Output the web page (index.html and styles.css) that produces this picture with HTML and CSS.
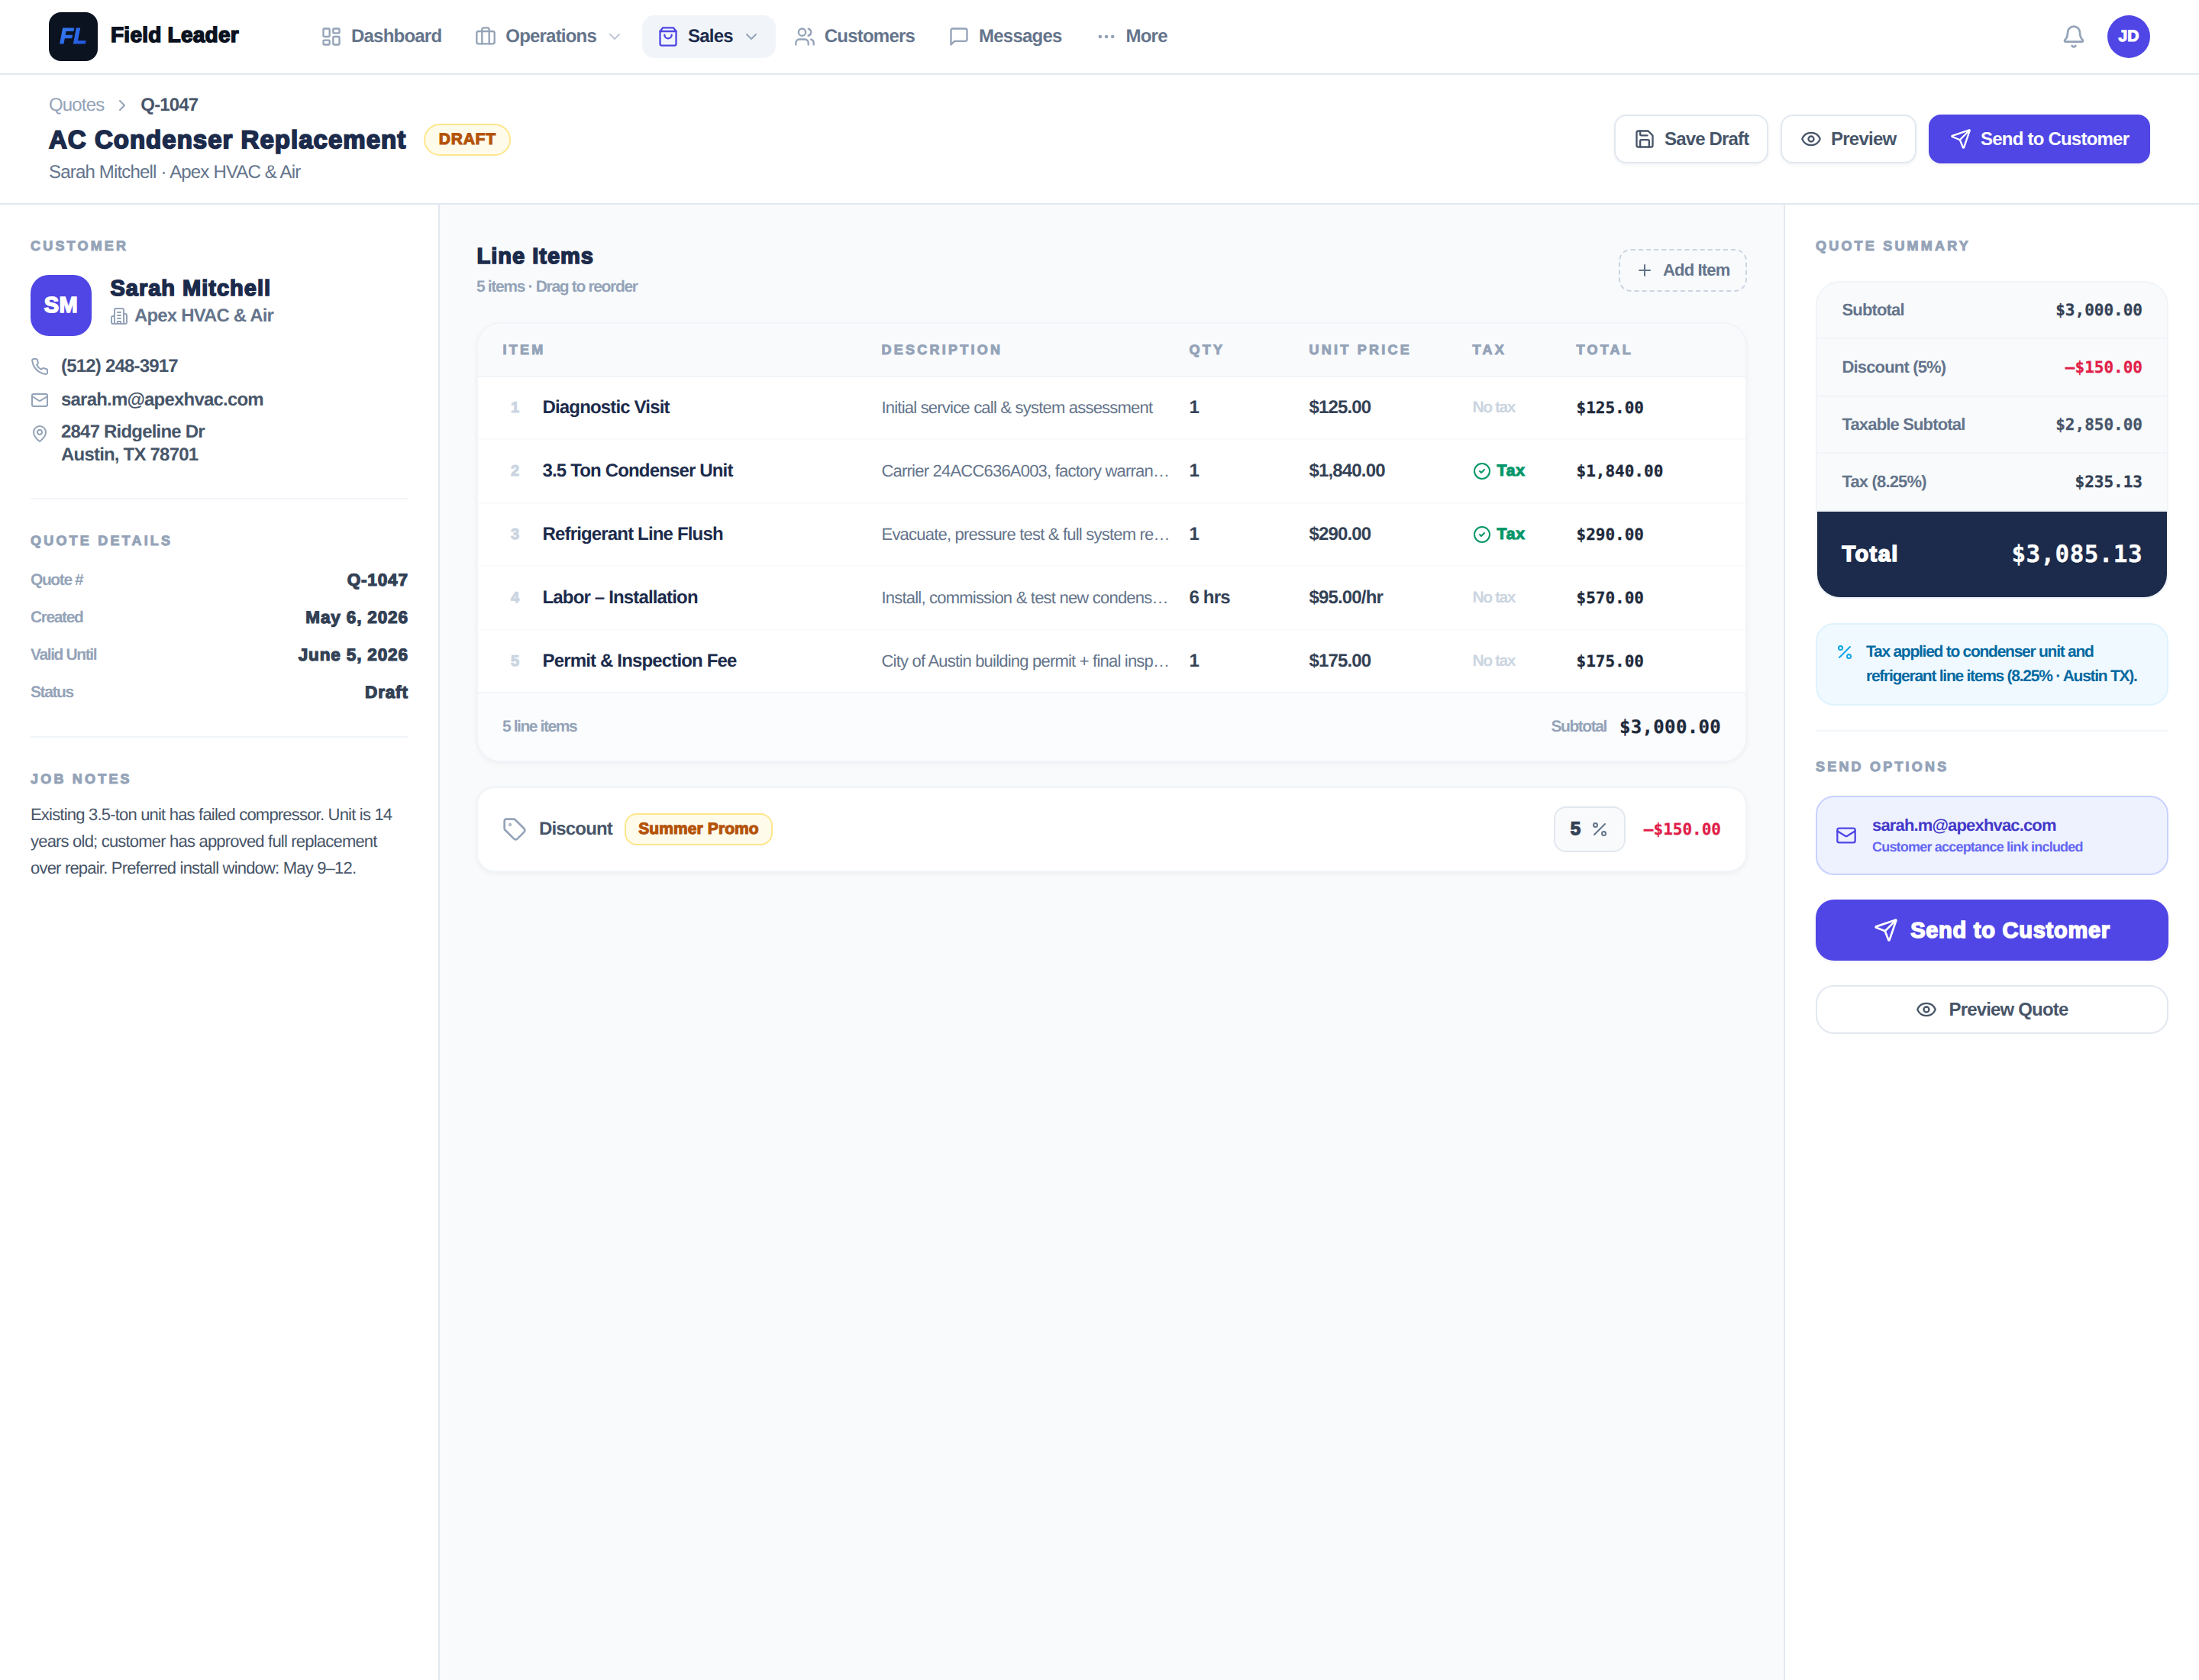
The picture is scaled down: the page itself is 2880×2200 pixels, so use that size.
FILE: index.html
```html
<!DOCTYPE html>
<html lang="en">
<head>
<meta charset="utf-8">
<title>Field Leader – Quote Q-1047</title>
<link rel="stylesheet" href="styles.css">
</head>
<body>
<svg class="sprite" aria-hidden="true">
  <symbol id="dashboard" viewBox="0 0 24 24"><rect x="3" y="3" width="7" height="9" rx="1"/><rect x="14" y="3" width="7" height="5" rx="1"/><rect x="14" y="12" width="7" height="9" rx="1"/><rect x="3" y="16" width="7" height="5" rx="1"/></symbol>
  <symbol id="luggage" viewBox="0 0 24 24"><path d="M16 20V4a2 2 0 0 0-2-2h-4a2 2 0 0 0-2 2v16"/><rect x="2" y="6" width="20" height="14" rx="2"/></symbol>
  <symbol id="bag" viewBox="0 0 24 24"><path d="M6 2 3 6v14a2 2 0 0 0 2 2h14a2 2 0 0 0 2-2V6l-3-4Z"/><path d="M3 6h18"/><path d="M16 10a4 4 0 0 1-8 0"/></symbol>
  <symbol id="users" viewBox="0 0 24 24"><path d="M16 21v-2a4 4 0 0 0-4-4H6a4 4 0 0 0-4 4v2"/><circle cx="9" cy="7" r="4"/><path d="M22 21v-2a4 4 0 0 0-3-3.87"/><path d="M16 3.13a4 4 0 0 1 0 7.75"/></symbol>
  <symbol id="message" viewBox="0 0 24 24"><path d="M21 15a2 2 0 0 1-2 2H7l-4 4V5a2 2 0 0 1 2-2h14a2 2 0 0 1 2 2z"/></symbol>
  <symbol id="dots" viewBox="0 0 24 24"><circle cx="12" cy="12" r="1"/><circle cx="19" cy="12" r="1"/><circle cx="5" cy="12" r="1"/></symbol>
  <symbol id="down" viewBox="0 0 24 24"><path d="m6 9 6 6 6-6"/></symbol>
  <symbol id="right" viewBox="0 0 24 24"><path d="m9 18 6-6-6-6"/></symbol>
  <symbol id="bell" viewBox="0 0 24 24"><path d="M10.268 21a2 2 0 0 0 3.464 0"/><path d="M3.262 15.326A1 1 0 0 0 4 17h16a1 1 0 0 0 .74-1.673C19.41 13.956 18 12.499 18 8A6 6 0 0 0 6 8c0 4.499-1.411 5.956-2.738 7.326"/></symbol>
  <symbol id="save" viewBox="0 0 24 24"><path d="M15.2 3a2 2 0 0 1 1.4.6l3.8 3.8a2 2 0 0 1 .6 1.4V19a2 2 0 0 1-2 2H5a2 2 0 0 1-2-2V5a2 2 0 0 1 2-2z"/><path d="M17 21v-7a1 1 0 0 0-1-1H8a1 1 0 0 0-1 1v7"/><path d="M7 3v4a1 1 0 0 0 1 1h7"/></symbol>
  <symbol id="eye" viewBox="0 0 24 24"><path d="M2.062 12.348a1 1 0 0 1 0-.696 10.75 10.75 0 0 1 19.876 0 1 1 0 0 1 0 .696 10.75 10.75 0 0 1-19.876 0"/><circle cx="12" cy="12" r="3"/></symbol>
  <symbol id="send" viewBox="0 0 24 24"><path d="M14.536 21.686a.5.5 0 0 0 .937-.024l6.5-19a.496.496 0 0 0-.635-.635l-19 6.5a.5.5 0 0 0-.024.937l7.93 3.18a2 2 0 0 1 1.112 1.11z"/><path d="m21.854 2.147-10.94 10.939"/></symbol>
  <symbol id="building" viewBox="0 0 24 24"><path d="M6 22V4a2 2 0 0 1 2-2h8a2 2 0 0 1 2 2v18Z"/><path d="M6 12H4a2 2 0 0 0-2 2v6a2 2 0 0 0 2 2h2"/><path d="M18 9h2a2 2 0 0 1 2 2v9a2 2 0 0 1-2 2h-2"/><path d="M10 7h4M10 11h4M10 15h4M10 22v-3h4v3"/></symbol>
  <symbol id="phone" viewBox="0 0 24 24"><path d="M22 16.92v3a2 2 0 0 1-2.18 2 19.79 19.79 0 0 1-8.63-3.07 19.5 19.5 0 0 1-6-6 19.79 19.79 0 0 1-3.07-8.67A2 2 0 0 1 4.11 2h3a2 2 0 0 1 2 1.72 12.84 12.84 0 0 0 .7 2.81 2 2 0 0 1-.45 2.11L8.09 9.91a16 16 0 0 0 6 6l1.27-1.27a2 2 0 0 1 2.11-.45 12.84 12.84 0 0 0 2.81.7A2 2 0 0 1 22 16.92z"/></symbol>
  <symbol id="mail" viewBox="0 0 24 24"><rect x="2" y="4" width="20" height="16" rx="2"/><path d="m22 7-8.97 5.7a1.94 1.94 0 0 1-2.06 0L2 7"/></symbol>
  <symbol id="pin" viewBox="0 0 24 24"><path d="M20 10c0 4.993-5.539 10.193-7.399 11.799a1 1 0 0 1-1.202 0C9.539 20.193 4 14.993 4 10a8 8 0 0 1 16 0"/><circle cx="12" cy="10" r="3"/></symbol>
  <symbol id="plus" viewBox="0 0 24 24"><path d="M5 12h14M12 5v14"/></symbol>
  <symbol id="check" viewBox="0 0 24 24"><circle cx="12" cy="12" r="10"/><path d="m9 12 2 2 4-4"/></symbol>
  <symbol id="tag" viewBox="0 0 24 24"><path d="M12.586 2.586A2 2 0 0 0 11.172 2H4a2 2 0 0 0-2 2v7.172a2 2 0 0 0 .586 1.414l8.704 8.704a2.426 2.426 0 0 0 3.42 0l6.58-6.58a2.426 2.426 0 0 0 0-3.42z"/><circle cx="7.5" cy="7.5" r=".5"/></symbol>
  <symbol id="percent" viewBox="0 0 24 24"><path d="M19 5 5 19"/><circle cx="6.5" cy="6.5" r="2.5"/><circle cx="17.5" cy="17.5" r="2.5"/></symbol>
</svg>

<header class="topbar">
  <div class="brand"><span class="logo"><span class="logo-text">FL</span></span><span class="brand-name heavy">Field Leader</span></div>
  <nav class="nav">
    <a class="nav-item"><svg class="i28"><use href="#dashboard"/></svg>Dashboard</a>
    <a class="nav-item"><svg class="i28"><use href="#luggage"/></svg>Operations<svg class="i24 faint"><use href="#down"/></svg></a>
    <a class="nav-item active"><svg class="i28"><use href="#bag"/></svg>Sales<svg class="i24 chev"><use href="#down"/></svg></a>
    <a class="nav-item"><svg class="i28"><use href="#users"/></svg>Customers</a>
    <a class="nav-item"><svg class="i28"><use href="#message"/></svg>Messages</a>
    <a class="nav-item"><svg class="i28"><use href="#dots"/></svg>More</a>
  </nav>
  <div class="account"><svg class="i32"><use href="#bell"/></svg><span class="user heavy">JD</span></div>
</header>

<section class="subheader">
  <div class="heading">
    <div class="crumbs"><span>Quotes</span><svg class="i24"><use href="#right"/></svg><b>Q-1047</b></div>
    <div class="title-row"><h1 class="heavy">AC Condenser Replacement</h1><span class="draft heavy">DRAFT</span></div>
    <p class="subtitle">Sarah Mitchell · Apex HVAC &amp; Air</p>
  </div>
  <div class="actions">
    <button class="btn save"><svg class="i28"><use href="#save"/></svg>Save Draft</button>
    <button class="btn look"><svg class="i28"><use href="#eye"/></svg>Preview</button>
    <button class="btn primary"><svg class="i28"><use href="#send"/></svg>Send to Customer</button>
  </div>
</section>

<div class="columns">
  <aside class="left">
    <h2 class="label heavy">CUSTOMER</h2>
    <div class="person">
      <span class="avatar heavy">SM</span>
      <div>
        <div class="person-name heavy">Sarah Mitchell</div>
        <div class="company"><svg class="i24"><use href="#building"/></svg>Apex HVAC &amp; Air</div>
      </div>
    </div>
    <div class="contact">
      <div class="contact-row"><svg class="i24"><use href="#phone"/></svg><span>(512) 248-3917</span></div>
      <div class="contact-row"><svg class="i24"><use href="#mail"/></svg><span>sarah.m@apexhvac.com</span></div>
      <div class="contact-row address"><svg class="i24"><use href="#pin"/></svg><span>2847 Ridgeline Dr<br>Austin, TX 78701</span></div>
    </div>
    <hr>
    <h2 class="label heavy">QUOTE DETAILS</h2>
    <dl class="details">
      <div><dt>Quote #</dt><dd class="heavy">Q-1047</dd></div>
      <div><dt>Created</dt><dd class="heavy">May 6, 2026</dd></div>
      <div><dt>Valid Until</dt><dd class="heavy">June 5, 2026</dd></div>
      <div><dt>Status</dt><dd class="heavy">Draft</dd></div>
    </dl>
    <hr>
    <h2 class="label heavy">JOB NOTES</h2>
    <p class="notes">Existing 3.5-ton unit has failed compressor. Unit is 14 years old; customer has approved full replacement over repair. Preferred install window: May 9–12.</p>
  </aside>

  <main class="center">
    <div class="items-head">
      <div><h2 class="items-title heavy">Line Items</h2><p class="items-sub">5 items · Drag to reorder</p></div>
      <button class="add"><svg class="i24"><use href="#plus"/></svg>Add Item</button>
    </div>
    <div class="card">
      <div class="grid head heavy"><span>ITEM</span><span>DESCRIPTION</span><span>QTY</span><span>UNIT PRICE</span><span>TAX</span><span>TOTAL</span></div>
      <div class="grid row"><span class="item"><i class="heavy">1</i>Diagnostic Visit</span><span class="desc">Initial service call &amp; system assessment</span><span>1</span><span>$125.00</span><span class="notax">No tax</span><span class="mono">$125.00</span></div>
      <div class="grid row"><span class="item"><i class="heavy">2</i>3.5 Ton Condenser Unit</span><span class="desc">Carrier 24ACC636A003, factory warran…</span><span>1</span><span>$1,840.00</span><span class="tax heavy"><svg class="i24"><use href="#check"/></svg>Tax</span><span class="mono">$1,840.00</span></div>
      <div class="grid row"><span class="item"><i class="heavy">3</i>Refrigerant Line Flush</span><span class="desc">Evacuate, pressure test &amp; full system re…</span><span>1</span><span>$290.00</span><span class="tax heavy"><svg class="i24"><use href="#check"/></svg>Tax</span><span class="mono">$290.00</span></div>
      <div class="grid row"><span class="item"><i class="heavy">4</i>Labor – Installation</span><span class="desc">Install, commission &amp; test new condens…</span><span>6 hrs</span><span>$95.00/hr</span><span class="notax">No tax</span><span class="mono">$570.00</span></div>
      <div class="grid row"><span class="item"><i class="heavy">5</i>Permit &amp; Inspection Fee</span><span class="desc">City of Austin building permit + final insp…</span><span>1</span><span>$175.00</span><span class="notax">No tax</span><span class="mono">$175.00</span></div>
      <div class="foot"><span>5 line items</span><span class="foot-sum">Subtotal<span class="mono big">$3,000.00</span></span></div>
    </div>
    <div class="discount">
      <svg class="i32"><use href="#tag"/></svg><span class="discount-name">Discount</span><span class="promo heavy">Summer Promo</span>
      <span class="pct"><b class="heavy">5</b><svg class="i24"><use href="#percent"/></svg></span>
      <span class="mono red">–$150.00</span>
    </div>
  </main>

  <aside class="right">
    <h2 class="label heavy">QUOTE SUMMARY</h2>
    <div class="summary">
      <div class="sum-row"><span>Subtotal</span><span class="mono">$3,000.00</span></div>
      <div class="sum-row"><span>Discount (5%)</span><span class="mono red">–$150.00</span></div>
      <div class="sum-row"><span>Taxable Subtotal</span><span class="mono soft">$2,850.00</span></div>
      <div class="sum-row"><span>Tax (8.25%)</span><span class="mono">$235.13</span></div>
      <div class="total"><span class="heavy">Total</span><span class="mono">$3,085.13</span></div>
    </div>
    <div class="tax-note"><svg class="i24"><use href="#percent"/></svg><p>Tax applied to condenser unit and<br>refrigerant line items (8.25% · Austin TX).</p></div>
    <hr>
    <h2 class="label send-label heavy">SEND OPTIONS</h2>
    <div class="recipient"><svg class="i28"><use href="#mail"/></svg><div><div class="mail-to">sarah.m@apexhvac.com</div><div class="mail-sub">Customer acceptance link included</div></div></div>
    <button class="wide send heavy"><svg class="i32"><use href="#send"/></svg>Send to Customer</button>
    <button class="wide preview"><svg class="i28"><use href="#eye"/></svg>Preview Quote</button>
  </aside>
</div>
</body>
</html>
```
FILE: styles.css
```css
* { box-sizing: border-box; margin: 0; padding: 0; }

body {
  height: 2200px;
  display: flex;
  flex-direction: column;
  overflow: hidden;
  background: #fff;
  color: #475569;
  font: 24px/1.25 "Liberation Sans", Arial, sans-serif;
  letter-spacing: -0.84px;
  text-rendering: geometricPrecision;
}

button { font: inherit; letter-spacing: inherit; background: #fff; white-space: nowrap; }
svg { flex: none; fill: none; stroke: currentColor; stroke-width: 2; stroke-linecap: round; stroke-linejoin: round; }
.sprite { display: none; }
.i24 { width: 24px; height: 24px; }
.i28 { width: 28px; height: 28px; }
.i32 { width: 32px; height: 32px; }

/* Extra-black weight: bold face thickened with a stroke */
.heavy { font-weight: 700; -webkit-text-stroke: 0.055em currentColor; }

.mono {
  font: 700 21px "DejaVu Sans Mono", monospace;
  letter-spacing: 0;
  color: #1e293b;
  -webkit-text-stroke: 0.3px currentColor;
}
.mono.red { color: #e11d48; }

/* Top bar */
.topbar { flex: none; height: 98px; padding: 0 64px; display: flex; align-items: center; border-bottom: 2px solid #e2e8f0; }
.brand { width: 336px; display: flex; align-items: center; gap: 17px; }
.logo { width: 64px; height: 64px; border-radius: 16px; background: #0b1220; display: flex; align-items: center; justify-content: center; }
.logo-text {
  padding: 0 4px;
  font: italic 700 29px/32px "Liberation Sans", Arial, sans-serif;
  letter-spacing: 0;
  color: transparent;
  -webkit-text-stroke: 1.2px transparent;
  background: linear-gradient(135deg, #3b82f6, #1d4ed8);
  -webkit-background-clip: text;
  background-clip: text;
}
.brand-name { padding-bottom: 5px; font-size: 28px; letter-spacing: 0.25px; color: #0b1220; }
.nav { display: flex; gap: 4px; }
.nav-item { height: 56px; padding: 0 20px; display: flex; align-items: center; gap: 12px; border-radius: 16px; font-weight: 700; letter-spacing: -0.79px; color: #64748b; }
.nav-item svg { color: #94a3b8; }
.nav-item .faint { opacity: 0.6; }
.nav-item.active { background: #f1f5f9; color: #1c2b4b; }
.nav-item.active svg { color: #4f46e5; }
.nav-item.active .chev { color: #94a3b8; }
.account { margin-left: auto; display: flex; align-items: center; gap: 28px; color: #94a3b8; }
.user { width: 56px; height: 56px; border-radius: 50%; background: #4f46e5; color: #fff; display: flex; align-items: center; justify-content: center; font-size: 21px; letter-spacing: 0; }

/* Quote header */
.subheader { flex: none; height: 170px; padding: 26px 64px 0; display: flex; justify-content: space-between; border-bottom: 2px solid #e2e8f0; }
.crumbs { height: 28px; display: flex; align-items: center; gap: 12px; color: #94a3b8; }
.crumbs b { color: #475569; }
.title-row { height: 42px; margin-top: 10px; display: flex; align-items: center; gap: 23px; }
h1 { font-size: 33px; line-height: 42px; letter-spacing: 1.02px; color: #1c2b4b; }
.draft { width: 114px; height: 42px; border: 2px solid #fde68a; border-radius: 21px; background: #fffbeb; color: #b45309; font-size: 21px; line-height: 38px; letter-spacing: 0.75px; text-align: center; }
.subtitle { margin-top: 8px; line-height: 28px; color: #64748b; letter-spacing: -0.82px; }
.actions { margin-top: 26px; display: flex; gap: 16px; }
.btn { height: 64px; padding-left: 24px; display: flex; align-items: center; gap: 12px; border: 2px solid #e2e8f0; border-radius: 16px; color: #475569; font-weight: 700; box-shadow: 0 2px 4px rgba(15, 23, 42, 0.05); }
.btn.save { width: 202px; }
.btn.look { width: 178px; letter-spacing: -0.75px; }
.btn.primary { width: 290px; padding-left: 26px; border-color: #4f46e5; background: #4f46e5; color: #fff; letter-spacing: -0.78px; }

/* Columns */
.columns { flex: 1; display: grid; grid-template-columns: 576px 1fr 544px; background: #f8fafc; }
.left, .right { padding: 44px 40px 0; background: #fff; }
.left { border-right: 2px solid #e2e8f0; }
.right { border-left: 2px solid #e2e8f0; }
.label { height: 20px; font-size: 18px; line-height: 20px; letter-spacing: 3.2px; color: #94a3b8; white-space: nowrap; }
hr { height: 2px; border: 0; background: #f1f5f9; }

.person { margin-top: 28px; display: flex; gap: 24px; }
.avatar { width: 80px; height: 80px; border-radius: 24px; background: #4f46e5; color: #fff; display: flex; align-items: center; justify-content: center; font-size: 29px; letter-spacing: 0.4px; }
.person-name { font-size: 29px; line-height: 36px; letter-spacing: 0.99px; text-indent: 0.5px; color: #1c2b4b; white-space: nowrap; }
.company { height: 36px; display: flex; align-items: center; gap: 8px; color: #64748b; font-weight: 700; }
.company svg, .contact svg { color: #94a3b8; }
.contact { margin: 25px 0 41px; font-weight: 700; letter-spacing: -0.8px; }
.contact-row { display: flex; align-items: center; gap: 16px; }
.contact-row + .contact-row { margin-top: 14px; }
.contact-row.address { margin-top: 12px; align-items: flex-start; }
.address svg { margin-top: 5px; }
.left hr + .label { margin-top: 44px; }
.details { margin: 18px 0 32px; }
.details div { height: 49px; display: flex; align-items: center; justify-content: space-between; }
.details dt { font-size: 21px; font-weight: 700; letter-spacing: -1.4px; color: #94a3b8; }
.details dd { font-size: 22.5px; letter-spacing: 0.85px; margin-right: -0.8px; color: #334155; }
.notes { margin-top: 19px; font-size: 22px; line-height: 35px; letter-spacing: -0.8px; }

/* Line items */
.center { padding: 50px 48px 0; }
.items-head { height: 72px; margin-bottom: 32px; display: flex; align-items: center; justify-content: space-between; }
.items-title { font-size: 29px; line-height: 36px; letter-spacing: 1px; text-indent: 0.5px; color: #1c2b4b; }
.items-sub { margin-top: 8px; font-size: 21px; line-height: 28px; font-weight: 700; letter-spacing: -1.33px; color: #94a3b8; }
.add { width: 168px; height: 56px; padding: 0 0 1px 20px; display: flex; align-items: center; gap: 12px; border: 2px dashed #cbd5e1; border-radius: 16px; background: transparent; color: #64748b; font-size: 22px; line-height: 24px; font-weight: 700; }
.card { border: 2px solid #f1f5f9; border-radius: 32px; background: #fff; overflow: hidden; box-shadow: 0 2px 6px rgba(15, 23, 42, 0.05); }
.grid { padding: 0 32px 0 32.5px; display: grid; grid-template-columns: 472px 379px 133px 190px 112px 1fr; column-gap: 24px; align-items: center; }
.head { height: 70px; border-bottom: 2px solid #f1f5f9; background: #f8fafc; color: #94a3b8; font-size: 18px; letter-spacing: 3.25px; }
.row { height: 82px; border-bottom: 2px solid #f8fafc; color: #334155; font-weight: 700; }
.row:nth-child(odd) { height: 84px; }
.row:nth-child(6) { height: 80px; border-bottom: 0; }
.row > * { white-space: nowrap; }
.item { display: flex; align-items: center; color: #1c2b4b; }
.item i { width: 32px; margin-right: 20px; font-size: 20px; font-style: normal; letter-spacing: 0; text-align: center; color: #cbd5e1; }
.desc { font-size: 22px; line-height: 32px; font-weight: 400; letter-spacing: -0.79px; color: #64748b; }
.notax { font-size: 21px; letter-spacing: -1.45px; color: #cbd5e1; }
.tax { display: flex; align-items: center; gap: 8px; font-size: 21px; letter-spacing: 0.9px; color: #059669; }
.tax svg { stroke-width: 2; }
.foot { height: 90px; padding: 0 32px; border-top: 2px solid #f1f5f9; background: #fbfcfe; display: flex; align-items: center; justify-content: space-between; color: #94a3b8; font-size: 21px; font-weight: 700; letter-spacing: -1.43px; }
.foot-sum { display: flex; align-items: center; gap: 17px; }
.mono.big { font-size: 24px; letter-spacing: 0.33px; }

.discount { height: 112px; margin-top: 32px; padding: 0 32px; display: flex; align-items: center; border: 2px solid #f1f5f9; border-radius: 24px; background: #fff; color: #94a3b8; box-shadow: 0 2px 6px rgba(15, 23, 42, 0.05); }
.discount-name { width: 112px; margin-left: 16px; font-weight: 700; color: #475569; }
.promo { width: 194px; height: 42px; border: 2px solid #fde68a; border-radius: 16px; background: #fffbeb; color: #b45309; font-size: 21px; line-height: 38px; letter-spacing: 0.1px; text-align: center; }
.pct { width: 94px; height: 60px; margin: 0 24px 0 auto; padding: 0 20px; display: flex; align-items: center; justify-content: space-between; border: 2px solid #e2e8f0; border-radius: 16px; background: #f8fafc; color: #64748b; }
.pct b { color: #334155; letter-spacing: 0; }

/* Summary */
.summary { margin-top: 36px; border: 2px solid #f1f5f9; border-radius: 32px; overflow: hidden; background: #f8fafc; }
.sum-row, .total { padding: 0 32px 0 32.5px; display: flex; align-items: center; justify-content: space-between; }
.sum-row { height: 74px; border-bottom: 2px solid #f1f5f9; font-size: 22px; font-weight: 700; color: #64748b; }
.sum-row:nth-child(even) { height: 76px; }
.sum-row .mono { color: #334155; }
.sum-row .mono.red { color: #e11d48; }
.sum-row .mono.soft { color: #475569; }
.total { height: 112px; background: #1c2b4b; color: #fff; font-size: 29px; letter-spacing: 1.4px; }
.total .mono { color: #fff; font-size: 31px; letter-spacing: 0.4px; }
.tax-note { margin: 32px 0; padding: 20px 24px; display: flex; gap: 16px; border: 2px solid #e0f2fe; border-radius: 24px; background: #f0f9ff; color: #0369a1; font-size: 21px; line-height: 32px; font-weight: 700; letter-spacing: -1.26px; white-space: nowrap; }
.tax-note svg { margin-top: 4px; color: #0ea5e9; }
.send-label { margin-top: 36px; }
.recipient { height: 104px; margin-top: 28px; padding: 0 24px; display: flex; align-items: center; gap: 20px; border: 2px solid #c7d2fe; border-radius: 24px; background: #eef2ff; color: #4f46e5; font-weight: 700; }
.mail-to { font-size: 22px; line-height: 30px; color: #4338ca; }
.mail-sub { font-size: 18px; line-height: 26px; letter-spacing: -0.8px; color: #6366f1; }
.wide { width: 100%; margin-top: 32px; display: flex; align-items: center; justify-content: center; gap: 16px; border-radius: 24px; font-weight: 700; }
.wide.send { height: 80px; border: 0; background: #4f46e5; color: #fff; font-size: 29px; letter-spacing: 0.75px; box-shadow: 0 2px 4px rgba(15, 23, 42, 0.06); }
.wide.preview { height: 64px; padding-right: 1px; border: 2px solid #e2e8f0; color: #475569; }
```
